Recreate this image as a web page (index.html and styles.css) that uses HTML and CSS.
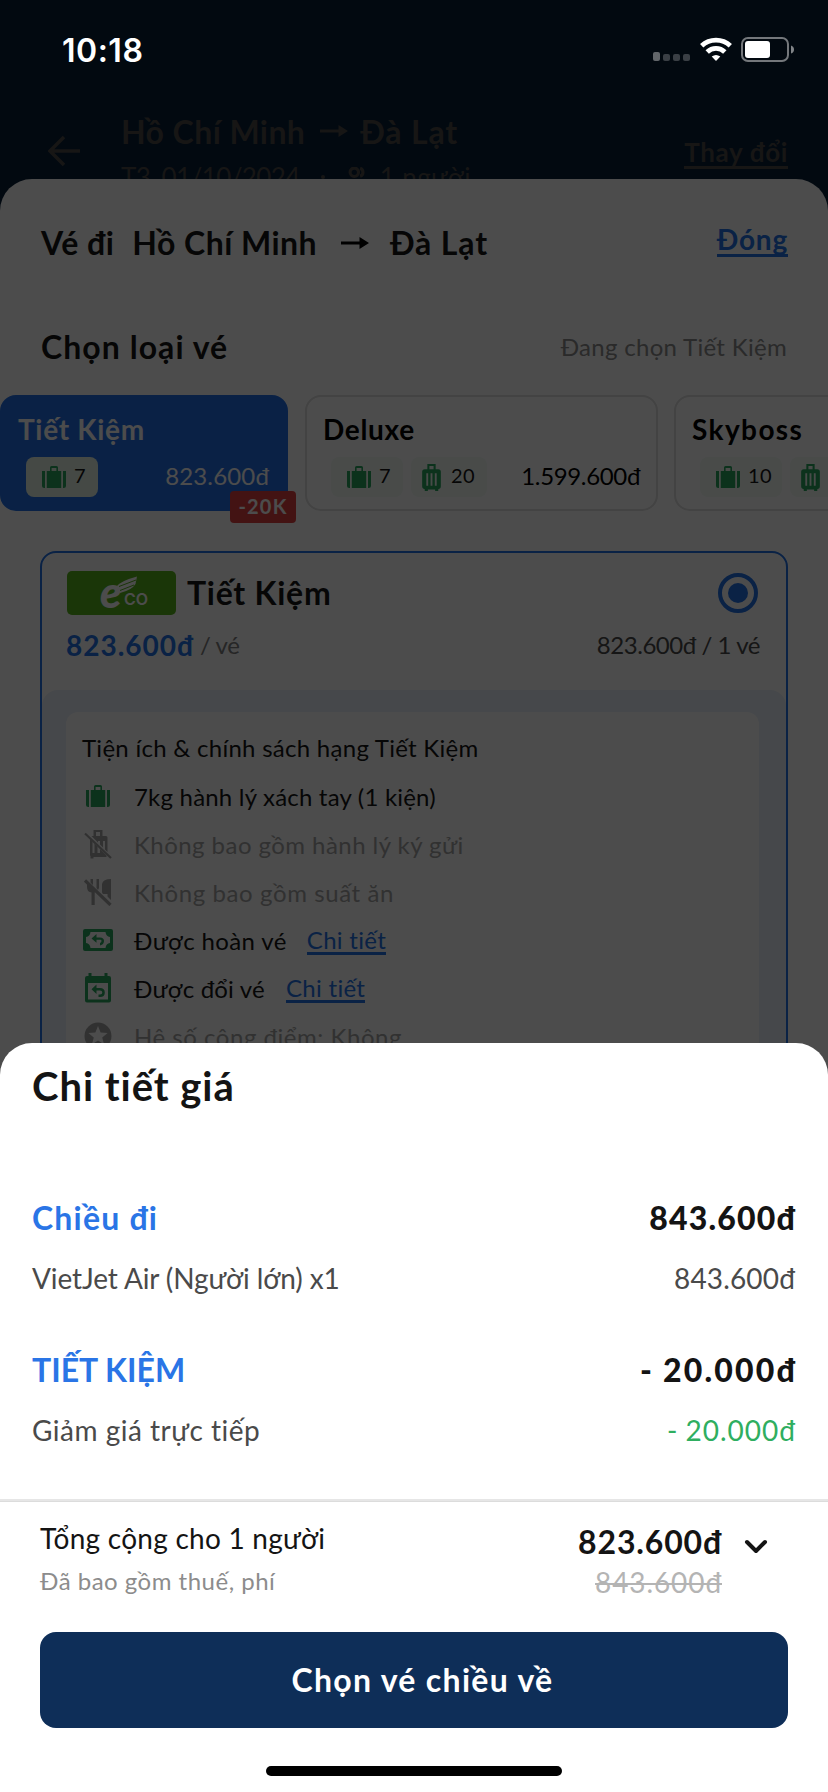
FILE: index.html
```html
<!DOCTYPE html>
<html lang="vi">
<head>
<meta charset="utf-8">
<title>Chi tiết giá</title>
<link rel="stylesheet" href="styles.css">
</head>
<body>
<svg class="defs" width="0" height="0" aria-hidden="true">
  <symbol id="bag" viewBox="0 0 24 22">
    <path d="M0 5h3v17H2.200Q0 22 0 20zM4.800 5h14.400v17H4.800zM21 5h3v15q0 2-2.200 2H21zM8 5V1.500Q8 0 9.500 0h5Q16 0 16 1.500V5h-1.600V1.900H9.600V5z"/>
  </symbol>
  <symbol id="trolley" viewBox="0 0 18 26">
    <path fill-rule="evenodd" d="M5 0h8v5h2.500Q18 5 18 7.500v14q0 2.500-2.500 2.700V26h-3v-1.500h-7V26h-3v-1.800Q0 24 0 21.500v-14Q0 5 2.500 5H5zM7 2v3h4V2zM4 9v12h1.800V9zM8.100 9v12h1.800V9zM12.200 9v12H14V9z"/>
  </symbol>
  <symbol id="arrow" viewBox="0 0 28 16">
    <path d="M0 6.500h18.500V2L28 8l-9.500 6V9.500H0z"/>
  </symbol>
</svg>

<main class="screen">
  <header class="trip">
    <svg class="trip-back" viewBox="0 0 32 32"><path d="M16 2 2 16l14 14M2 16h30"/></svg>
    <div class="trip-info">
      <div class="trip-route"><span class="t-city">Hồ Chí Minh</span><svg class="arrow"><use href="#arrow"/></svg><span class="t-dest">Đà Lạt</span></div>
      <div class="trip-meta"><span class="t-date">T3, 01/10/2024</span><i class="dot"></i>
        <svg class="people" viewBox="0 0 20 20"><circle cx="6" cy="5" r="4"/><path d="M11.500 1.200a4 4 0 0 1 0 7.600M0.500 19q0-6 5.500-6t5.500 6zM14 13q4.500 1 4.500 6"/></svg>
        <span class="t-pax">1 người</span></div>
    </div>
    <a class="trip-change">Thay đổi</a>
  </header>

  <section class="fares">
    <div class="fares-head">
      <span class="t-leg">Vé đi</span><span class="t-city">Hồ Chí Minh</span><svg class="arrow"><use href="#arrow"/></svg><span class="t-dest">Đà Lạt</span>
      <a class="close">Đóng</a>
    </div>
    <div class="fares-sub">
      <h2 class="h-type">Chọn loại vé</h2>
      <span class="t-current">Đang chọn Tiết Kiệm</span>
    </div>

    <div class="tabs">
      <div class="tab tab-on">
        <div class="tab-name t-tk">Tiết Kiệm</div>
        <div class="tab-row">
          <span class="pill"><svg class="bag"><use href="#bag"/></svg><span>7</span></span>
          <span class="tab-price">823.600đ</span>
        </div>
        <span class="badge">-20K</span>
      </div>
      <div class="tab tab-mid">
        <div class="tab-name t-dl">Deluxe</div>
        <div class="tab-row">
          <span class="pill"><svg class="bag"><use href="#bag"/></svg><span>7</span></span>
          <span class="pill pill-trolley"><svg class="trolley"><use href="#trolley"/></svg><span>20</span></span>
          <span class="tab-price price-long">1.599.600đ</span>
        </div>
      </div>
      <div class="tab tab-last">
        <div class="tab-name t-sb">Skyboss</div>
        <div class="tab-row">
          <span class="pill pill-wide"><svg class="bag"><use href="#bag"/></svg><span>10</span></span>
          <span class="pill pill-trolley"><svg class="trolley"><use href="#trolley"/></svg></span>
        </div>
      </div>
    </div>

    <article class="fare">
      <div class="fare-head">
        <svg class="eco" viewBox="0 0 109 44">
          <text class="eco-e" x="33" y="37">e</text>
          <text class="eco-co" x="57" y="34">CO</text>
          <path d="M49 16Q53 10 70 5.500L68.500 13Q65 19 53 22z"/>
          <path class="eco-cut" d="M52 15.500 69 9M53 19.500l14-5.500"/>
        </svg>
        <h3 class="fare-name">Tiết Kiệm</h3>
        <svg class="radio" viewBox="0 0 40 40"><circle class="ring" cx="20" cy="20" r="18"/><circle class="core" cx="20" cy="20" r="10"/></svg>
      </div>
      <div class="fare-price">
        <b>823.600đ</b><span class="per">/ vé</span><span class="total">823.600đ / 1 vé</span>
      </div>
      <div class="perks">
        <div class="perks-box">
          <div class="perks-title">Tiện ích &amp; chính sách hạng Tiết Kiệm</div>
          <ul>
            <li><span class="ico"><svg class="bag"><use href="#bag"/></svg></span><span class="p1">7kg hành lý xách tay (1 kiện)</span></li>
            <li class="off"><span class="ico"><svg width="28" height="30" viewBox="0 0 28 30"><path fill-rule="evenodd" d="M9.500 1h9v6H22q1.500 0 1.500 1.500V23L21 20.500V12h-2v6.500l-3-3V12h-2v1.500L7.500 7h2zM12 3v4h4V3zM6 10l2.500 2.500V24h2V14.500l3 3V24H16v-4l6.500 6.500V28H9.500v1.500h-3V27Q6 27 6 26z"/><path class="slash" d="M1 4.500 27 29"/></svg></span><span class="p2">Không bao gồm hành lý ký gửi</span></li>
            <li class="off"><span class="ico"><svg width="28" height="28" viewBox="0 0 28 28"><path d="M3 1v8q0 5 4.500 5.500V27h3.200V14.500l1.500-.7L3 4.500V1zM6.500 1H9v6L6.500 4.500zM12.500 1H15v9l-1 2-1.500-2zM18 6q1-5 9-5v21l-3.500-3.500V16h-4.500l-1-1.500z"/><path class="slash thick" d="M1 2.500 26.500 27"/></svg></span><span class="p3">Không bao gồm suất ăn</span></li>
            <li><span class="ico"><svg width="30" height="22" viewBox="0 0 30 22"><path fill-rule="evenodd" d="M2 0h26q2 0 2 2v18q0 2-2 2H2q-2 0-2-2V2Q0 0 2 0zM7.500 3Q7 7.500 3 8v6q4 .5 4.500 5h15q.5-4.500 4.500-5V8q-4-.5-4.500-5z"/><path d="M13.500 5v3.500H17q4 0 4 3.500t-4 4.500v-2.500q1.500-.5 1.500-2T17 10.800h-3.500v3L8.500 9.500z"/></svg></span><span class="p4">Được hoàn vé</span><a class="more gap4">Chi tiết</a></li>
            <li><span class="ico"><svg width="28" height="30" viewBox="0 0 28 30"><path fill-rule="evenodd" d="M4.500 0h3v3h13V0h3v3H25q2 0 2 2v22.500q0 2-2 2H3q-2 0-2-2V5q0-2 2-2h1.500zM4 10v16.500h20V10z"/><path d="M12.500 11.500V15H16q4.800 0 4.800 4.500T16 24h-1.500v-2.500H16q2.300 0 2.300-2T16 17.500h-3.500V21L7.500 16.200z"/></svg></span><span class="p5">Được đổi vé</span><a class="more gap5">Chi tiết</a></li>
            <li class="off"><span class="ico"><svg width="28" height="28" viewBox="0 0 28 28"><path fill-rule="evenodd" d="M14 .5a13.500 13.500 0 1 1 0 27 13.500 13.500 0 0 1 0-27zM14 4l-2.600 6.600-7 .4 5.400 4.500L8 22.300l6-3.800 6 3.800-1.800-6.800 5.400-4.500-7-.4z"/></svg></span><span class="p6">Hệ số cộng điểm: Không</span></li>
          </ul>
        </div>
      </div>
    </article>
  </section>

  <div class="scrim"></div>

  <div class="status">
    <span class="clock">10:18</span>
    <svg class="status-icons" width="142" height="26" viewBox="0 0 142 26">
      <g fill="#fff"><rect x="0" y="15" width="7" height="9" rx="2" opacity=".38"/><g opacity=".22"><rect x="10" y="17" width="7" height="7" rx="2"/><rect x="20" y="17" width="7" height="7" rx="2"/><rect x="30" y="17" width="7" height="7" rx="2"/></g></g>
      <g fill="none" stroke="#fff" stroke-width="4.800"><path d="M48.700 8.800a20.800 20.800 0 0 1 28.600 0"/><path d="M54.200 15a12.600 12.600 0 0 1 17.600 0"/></g>
      <path fill="#fff" d="m63 24-4.300-4.500q4.300-3.200 8.600 0z"/>
      <rect x="89" y="1" width="46" height="23" rx="6" fill="none" stroke="#fff" stroke-width="2" opacity=".45"/>
      <rect x="92" y="4" width="25" height="17" rx="3" fill="#fff"/>
      <path d="M138 8.500q3 1 3 4t-3 4z" fill="#fff" opacity=".5"/>
    </svg>
  </div>

  <section class="detail">
    <h1 class="detail-title">Chi tiết giá</h1>
    <div class="line head first"><span class="d1">Chiều đi</span><b class="d2">843.600đ</b></div>
    <div class="line"><span class="d3">VietJet Air (Người lớn) x1</span><span class="d4">843.600đ</span></div>
    <div class="line head"><span class="d5">TIẾT KIỆM</span><b class="d6">- 20.000đ</b></div>
    <div class="line"><span class="d7">Giảm giá trực tiếp</span><span class="d8">- 20.000đ</span></div>
    <div class="rule"></div>
    <footer class="sum">
      <div class="sum-left"><div class="s1">Tổng cộng cho 1 người</div><div class="s2">Đã bao gồm thuế, phí</div></div>
      <div class="sum-right"><div class="s3">823.600đ</div><div class="s4">843.600đ</div></div>
      <svg class="chev" viewBox="0 0 24 16"><path d="m3 3 9 9 9-9"/></svg>
    </footer>
    <button class="cta"><span>Chọn vé chiều về</span></button>
    <div class="home"></div>
  </section>
</main>
</body>
</html>
```
FILE: styles.css
```css
* { box-sizing: border-box; margin: 0; padding: 0; }
body { font-family: Lato, "Noto Sans", sans-serif; font-variant-ligatures: none; background: #fff; }
.defs { position: absolute; }
.screen { position: relative; width: 828px; height: 1792px; overflow: hidden; background: #071e37; white-space: nowrap; }
ul { list-style: none; }
svg { flex: none; display: block; }

/* Trip header behind the sheets */
.trip { display: flex; height: 240px; padding: 111px 40px 0 48px; color: #4d4b48; }
.trip-back { width: 32px; height: 32px; margin-top: 24px; fill: none; stroke: #4d4b48; stroke-width: 3.500; }
.trip-info { margin-left: 41px; flex: 1; }
.trip-route { display: flex; align-items: center; height: 40px; font-size: 32px; font-weight: 700; }
.trip-route .t-city { letter-spacing: .42px; }
.trip-route .t-dest { letter-spacing: .8px; }
.trip-route .arrow { margin: 0 12px 0 15px; fill: #4d4b48; }
.trip-meta { display: flex; align-items: center; height: 36px; margin-top: 8px; font-size: 26px; }
.t-date { letter-spacing: -.6px; }
.t-pax { letter-spacing: .4px; }
.trip-change { align-self: flex-start; margin-top: 25px; line-height: 32px; height: 33px; font-size: 26px; font-weight: 700; letter-spacing: .65px; border-bottom: 3px solid #4d4b48; }
.dot { width: 4px; height: 4px; border-radius: 50%; background: #4d4b48; margin: 0 23px 0 21px; }
.people { width: 21px; height: 21px; fill: none; stroke: #4d4b48; stroke-width: 3; margin-right: 11px; }
.arrow { width: 28px; height: 16px; }

/* Fare sheet */
.fares { position: absolute; left: 0; right: 0; top: 179px; bottom: 0; padding-top: 43px; border-radius: 32px 32px 0 0; background: #fff; color: #141414; overflow: hidden; }
.fares-head { display: flex; align-items: center; height: 40px; padding: 0 40px 0 41px; font-size: 32px; font-weight: 700; }
.t-leg { letter-spacing: .5px; }
.fares-head .t-city { margin-left: 18px; letter-spacing: .45px; }
.fares-head .t-dest { letter-spacing: .85px; }
.fares-head .arrow { margin: 2px 21px 0 24px; }
.close { margin-left: auto; height: 32px; line-height: 29px; margin-top: -2px; font-size: 28px; letter-spacing: .8px; color: #2272e8; border-bottom: 3px solid #2272e8; }
.fares-sub { display: flex; align-items: center; justify-content: space-between; height: 40px; margin-top: 64px; padding: 0 41px 0 41px; }
.h-type { font-size: 32px; font-weight: 700; letter-spacing: 1.05px; }
.t-current { font-size: 24px; letter-spacing: .3px; color: #8c8c8c; }

.tabs { display: flex; gap: 16px; height: 116px; margin-top: 29px; }
.tab { position: relative; flex: none; border: 2px solid #dfdfdf; border-radius: 16px; padding: 14px 16px 0; color: #000; }
.tab-on { width: 288px; margin-right: 1px; background: #2270e8; border-color: #2270e8; color: #fff; }
.tab-mid { width: 353px; }
.tab-last { width: 353px; }
.tab-name { height: 36px; line-height: 36px; font-size: 28px; font-weight: 700; letter-spacing: .7px; }
.t-sb { letter-spacing: 1.4px; }
.tab-row { display: flex; align-items: center; height: 40px; margin-top: 10px; padding-left: 8px; gap: 8px; }
.pill { display: flex; align-items: center; width: 72px; height: 40px; padding-left: 16px; gap: 8px; border-radius: 8px; background: #f4fbf6; font-size: 20px; color: #141414; letter-spacing: .3px; }
.pill span { line-height: 24px; padding-bottom: 4px; }
.tab-on .pill { background: #e6f5e6; }
.pill-trolley { width: 76px; padding-left: 11px; gap: 10px; }
.pill-wide { width: 82px; }
.bag { width: 24px; height: 22px; fill: #28a960; }
.trolley { width: 19px; height: 27px; fill: #28a960; }
.tab-price { margin-left: auto; padding-bottom: 4px; font-size: 24px; letter-spacing: .15px; }
.tab-on .tab-price { margin-right: 1px; }
.price-long { letter-spacing: -.35px; }
.badge { position: absolute; left: 228px; top: 94px; width: 66px; height: 32px; line-height: 30px; text-align: center; border-radius: 4px; background: #df4242; color: #fff; font-size: 20px; font-weight: 700; letter-spacing: 1.200px; }

/* Selected fare */
.fare { margin: 40px 40px 0; height: 700px; border: 2px solid #2272e8; border-radius: 16px; padding-top: 18px; }
.fare-head { display: flex; align-items: center; height: 44px; padding: 0 28px 0 25px; }
.eco { width: 109px; height: 44px; border-radius: 5px; background: #58b41c; fill: #fff; overflow: visible; }
.eco-e { font: italic 900 44px Lato, sans-serif; }
.eco-co { font: 600 16px Inter, sans-serif; }
.eco-cut { stroke: #58b41c; stroke-width: 1; }
.fare-name { margin: -2px 0 0 11px; font-size: 32px; font-weight: 700; letter-spacing: .75px; }
.radio { width: 40px; height: 40px; margin-left: auto; }
.ring { fill: none; stroke: #2272e8; stroke-width: 4; }
.core { fill: #2272e8; }
.fare-price { display: flex; align-items: center; height: 36px; margin-top: 12px; padding: 0 26px 0 24px; font-size: 24px; }
.fare-price b { font-size: 28px; letter-spacing: 1px; color: #2272e8; }
.per { margin: -2px 0 0 6px; letter-spacing: -.4px; color: #808080; }
.total { margin: -2px 0 0 auto; letter-spacing: -.45px; color: #4a4a4a; }
.perks { margin-top: 27px; height: 500px; padding: 22px 27px 0 24px; border-radius: 16px 16px 0 0; background: #eaf0fa; }
.perks-box { height: 470px; padding: 12px 16px 0; background: #fff; border-radius: 12px; font-size: 24px; }
.perks-title { height: 48px; line-height: 48px; letter-spacing: .27px; }
.perks li { display: flex; align-items: center; height: 48px; }
.ico { display: flex; align-items: center; justify-content: center; width: 32px; margin-right: 20px; fill: #28a960; }
.off { color: #a6a6a6; }
.off .ico { fill: #a6a6a6; }
.slash { stroke: #a6a6a6; stroke-width: 2.200; fill: none; }
.thick { stroke-width: 3.200; }
.p1 { letter-spacing: .2px; }
.p2 { letter-spacing: .45px; }
.p3 { letter-spacing: .6px; }
.p4 { letter-spacing: .38px; }
.p5 { letter-spacing: .2px; }
.p6 { letter-spacing: .53px; }
.more { height: 29px; line-height: 28px; margin-top: 1px; color: #2272e8; letter-spacing: .3px; border-bottom: 3px solid #2272e8; }
.gap4 { margin-left: 20px; }
.gap5 { margin-left: 21px; }

.scrim { position: absolute; inset: 0; background: rgba(0, 0, 0, .7); }

/* System status bar */
.status { position: absolute; top: 37px; left: 0; right: 0; display: flex; align-items: center; justify-content: space-between; height: 26px; padding: 0 33px 0 62px; }
.clock { font: 600 32px Inter, sans-serif; letter-spacing: .5px; color: #fff; }

/* Price detail sheet */
.detail { position: absolute; left: 0; right: 0; bottom: 0; height: 749px; padding-top: 19px; border-radius: 32px 32px 0 0; background: #fff; color: #141414; }
.detail-title { height: 48px; line-height: 48px; padding-left: 32px; font-size: 40px; font-weight: 700; letter-spacing: .95px; }
.line { display: flex; justify-content: space-between; margin-top: 22px; padding: 0 33px 0 32px; height: 36px; line-height: 36px; font-size: 28px; color: #4a4a4a; }
.line.head { margin-top: 54px; height: 40px; line-height: 40px; font-size: 32px; font-weight: 700; color: #2a75e6; }
.line.first { margin-top: 88px; }
.head b { color: #141414; margin-right: -1px; }
.d1 { letter-spacing: 1.200px; }
.d2 { letter-spacing: 1.200px; }
.d3 { letter-spacing: -.1px; }
.d4 { letter-spacing: .15px; }
.head .d6 { letter-spacing: 2.200px; word-spacing: -1px; margin-right: -2px; }
.d7 { letter-spacing: .5px; }
.d8 { color: #2fae60; letter-spacing: 1px; word-spacing: -1px; margin-right: -1px; }
.rule { height: 3px; margin-top: 51px; background: #e6e6e6; border-bottom: 1px solid #dcdcdc; }
.sum { display: flex; height: 95px; padding: 18px 60px 0 40px; }
.sum-left { flex: 1; }
.s1 { height: 36px; line-height: 36px; font-size: 28px; letter-spacing: .25px; }
.s2 { height: 30px; line-height: 30px; margin-top: 10px; font-size: 24px; letter-spacing: .5px; color: #8c8c8c; }
.sum-right { text-align: right; margin-right: -1px; }
.s3 { height: 40px; line-height: 40px; margin-top: 2px; font-size: 32px; font-weight: 700; letter-spacing: .85px; }
.s4 { height: 30px; line-height: 30px; margin-top: 5px; font-size: 28px; letter-spacing: .9px; color: #b4b4b4; text-decoration: line-through; text-decoration-thickness: 2px; }
.chev { width: 24px; height: 16px; margin: 19px 0 0 23px; fill: none; stroke: #141414; stroke-width: 4; stroke-linecap: round; stroke-linejoin: round; }
.cta { display: block; width: 748px; height: 96px; margin: 35px 40px 0; padding: 0 0 2px 17px; border: 0; border-radius: 16px; background: #0e2e58; color: #fff; font: 700 32px Lato, sans-serif; letter-spacing: 1.300px; }
.home { width: 296px; height: 10px; margin: 38px auto 0; border-radius: 5px; background: #000; }
```
